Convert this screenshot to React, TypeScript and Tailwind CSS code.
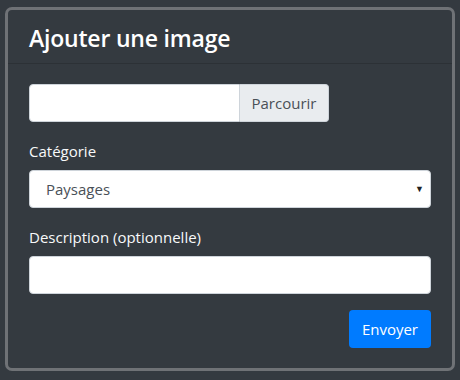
import React from "react";

export default function App() {
  return (
    <div
      className="w-[460px] h-[380px] bg-[#343a40] pt-[7px] px-[5px]"
      style={{ fontFamily: '"Open Sans", "Noto Sans", sans-serif' }}
    >
      <div className="w-[450px] h-[364px] border-[3px] border-[#6f7276] rounded-[7px] flex flex-col">
        <div className="h-[54px] border-b border-[#2c3136] px-[21px] pt-[3px] flex items-center">
          <h4 className="text-[23px] font-semibold text-white leading-none tracking-[-0.2px]">Ajouter une image</h4>
        </div>
        <div className="px-[21px] pt-[20px] flex flex-col">
          <div className="flex h-[38px] w-[300px]">
            <div className="w-[211px] h-full bg-white border border-[#ced4da] rounded-l-[4px]" />
            <div className="flex-1 h-full bg-[#e9ecef] border border-l-0 border-[#ced4da] rounded-r-[4px] flex items-center justify-center text-[15px] text-[#495057]">
              Parcourir
            </div>
          </div>
          <label className="mt-[18px] text-[15px] text-[#f8f9fa] leading-[22px]">Catégorie</label>
          <div className="mt-[8px] h-[38px] w-full bg-white border border-[#ced4da] rounded-[4px] flex items-center pl-[16px] pr-[6px] text-[15px] text-[#495057] relative">
            <span>Paysages</span>
            <span className="absolute right-[6px] top-[11px] text-[9px] text-[#222]">▼</span>
          </div>
          <label className="mt-[18px] text-[15px] text-[#f8f9fa] leading-[22px]">Description (optionnelle)</label>
          <div className="mt-[8px] h-[38px] w-full bg-white border border-[#ced4da] rounded-[4px]" />
          <div className="mt-[16px] flex justify-end">
            <button className="h-[38px] px-[13px] bg-[#007bff] text-white text-[15px] rounded-[4px]">Envoyer</button>
          </div>
        </div>
      </div>
    </div>
  );
}
